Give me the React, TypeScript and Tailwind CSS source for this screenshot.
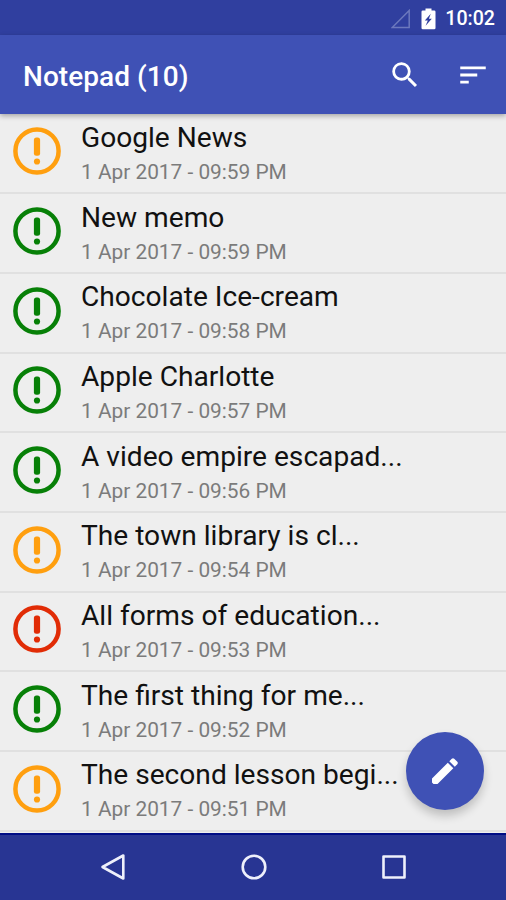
type Priority = 'low' | 'medium' | 'high';

const NOTES: { title: string; date: string; priority: Priority }[] = [
  { title: 'Google News', date: '1 Apr 2017 - 09:59 PM', priority: 'medium' },
  { title: 'New memo', date: '1 Apr 2017 - 09:59 PM', priority: 'low' },
  { title: 'Chocolate Ice-cream', date: '1 Apr 2017 - 09:58 PM', priority: 'low' },
  { title: 'Apple Charlotte', date: '1 Apr 2017 - 09:57 PM', priority: 'low' },
  { title: 'A video empire escapad...', date: '1 Apr 2017 - 09:56 PM', priority: 'low' },
  { title: 'The town library is cl...', date: '1 Apr 2017 - 09:54 PM', priority: 'medium' },
  { title: 'All forms of education...', date: '1 Apr 2017 - 09:53 PM', priority: 'high' },
  { title: 'The first thing for me...', date: '1 Apr 2017 - 09:52 PM', priority: 'low' },
  { title: 'The second lesson begi...', date: '1 Apr 2017 - 09:51 PM', priority: 'medium' },
];

const PRIORITY_COLOR: Record<Priority, string> = {
  low: 'text-[#078007]',
  medium: 'text-[#ff9f0f]',
  high: 'text-[#e12c06]',
};

const StatusBar = () => (
  <div className="h-[35px] shrink-0 bg-[#303f9f] flex items-center justify-end pr-[11px] pt-[2px] text-white">
    <svg className="w-5 h-5 mr-[10px]" viewBox="0 0 20 20" fill="none">
      <path d="M18.2 1.500v17H1.2z" stroke="#6c78bd" strokeWidth="1.5" />
    </svg>
    <svg className="w-[15px] h-[22px] mr-[9px]" viewBox="0 0 15 22">
      <path
        fill="currentColor"
        fillRule="evenodd"
        d="M4.5 0.5h6v2h2.700a1.300 1.300 0 0 1 1.300 1.300v16.200a1.300 1.300 0 0 1-1.300 1.300H1.800a1.300 1.300 0 0 1-1.300-1.300V3.800a1.300 1.300 0 0 1 1.300-1.300H4.500zM9.800 5.800 3.800 12.500h3l-2.200 5.300 6.200-7H7.900z"
      />
    </svg>
    <span className="text-[19.600px] leading-none font-medium pt-px">10:02</span>
  </div>
);

const AppBar = () => (
  <div className="relative z-10 h-[79px] shrink-0 bg-[#3f51b5] flex items-center pl-[23px] pr-4 text-white shadow-[0_2px_5px_rgba(0,0,0,0.3)]">
    <h1 className="flex-1 text-[28px] leading-none font-medium tracking-[0.05px] pt-[5px]">Notepad (10)</h1>
    <svg className="w-[34px] h-[34px] mr-[34px]" viewBox="0 0 24 24" fill="currentColor">
      <path d="M15.500 14h-.79l-.28-.27A6.471 6.471 0 0 0 16 9.500 6.500 6.500 0 1 0 9.500 16c1.610 0 3.090-.59 4.230-1.570l.27.28v.79l5 4.990L20.490 19l-4.990-5zm-6 0C7.010 14 5 11.990 5 9.500S7.010 5 9.500 5 14 7.010 14 9.500 11.990 14 9.500 14z" />
    </svg>
    <svg className="w-[34px] h-[34px]" viewBox="0 0 24 24" fill="currentColor">
      <path d="M3 18h6v-2H3v2zM3 6v2h18V6H3zm0 7h12v-2H3v2z" />
    </svg>
  </div>
);

const PriorityIcon = ({ priority }: { priority: Priority }) => (
  <svg className={`w-12 h-12 shrink-0 ${PRIORITY_COLOR[priority]}`} viewBox="0 0 48 48" fill="none">
    <circle cx="24" cy="24" r="21.600" stroke="currentColor" strokeWidth="4.500" />
    <rect x="20.900" y="10.600" width="6.200" height="18.200" rx="2.500" fill="currentColor" />
    <circle cx="24" cy="34.500" r="3.100" fill="currentColor" />
  </svg>
);

const NavBar = () => (
  <div className="h-[67px] shrink-0 bg-[#283593] border-t-2 border-[#000d85] flex items-center justify-between pl-[98px] pr-[97px] pb-[2px] text-[#eef0fb]">
    <svg className="w-[30px] h-[30px]" viewBox="0 0 30 30" fill="none" stroke="currentColor" strokeWidth="2.600" strokeLinejoin="round">
      <path d="M25.300 3.500v23L4.500 15z" />
    </svg>
    <svg className="w-[30px] h-[30px]" viewBox="0 0 30 30" fill="none" stroke="currentColor" strokeWidth="2.600">
      <circle cx="15" cy="15" r="11.300" />
    </svg>
    <svg className="w-[30px] h-[30px]" viewBox="0 0 30 30" fill="none" stroke="currentColor" strokeWidth="2.600" strokeLinejoin="round">
      <rect x="4.500" y="4.500" width="21" height="21" />
    </svg>
  </div>
);

export default function App() {
  return (
    <div className="relative w-[506px] h-[900px] overflow-hidden flex flex-col bg-[#eeeeee] font-[Roboto,sans-serif]">
      <StatusBar />
      <AppBar />
      <ul className="flex-1 min-h-0 overflow-hidden pt-[0.600px]">
        {NOTES.map((note) => (
          <li key={note.title} className="h-[79.700px] flex items-start border-b-2 border-[#e0e0e0] pl-[13px]">
            <div className="pt-[12.600px]">
              <PriorityIcon priority={note.priority} />
            </div>
            <div className="pl-5 pt-[7.300px]">
              <p className="text-[28.130px] leading-[32px] text-[#111111] whitespace-nowrap">{note.title}</p>
              <p className="text-[20.850px] leading-[24px] pt-[6px] text-[#7b7b7b] whitespace-nowrap">{note.date}</p>
            </div>
          </li>
        ))}
      </ul>
      <NavBar />
      <button
        aria-label="Edit"
        className="absolute right-[22px] bottom-[90px] w-[78px] h-[78px] rounded-full bg-[#3f51b5] text-white flex items-center justify-center shadow-[0_6px_10px_rgba(0,0,0,0.2)]"
      >
        <svg className="w-[34px] h-[34px]" viewBox="0 0 34 34" fill="currentColor">
          <path d="M4 24.500 19.800 8.700l5.500 5.500L9.500 30H5.500L4 28.500zM21.300 7.200l2.500-2.500q1.200-1 2.400 0l3.100 3.100q1 1.200 0 2.400l-2.500 2.500z" />
        </svg>
      </button>
    </div>
  );
}
